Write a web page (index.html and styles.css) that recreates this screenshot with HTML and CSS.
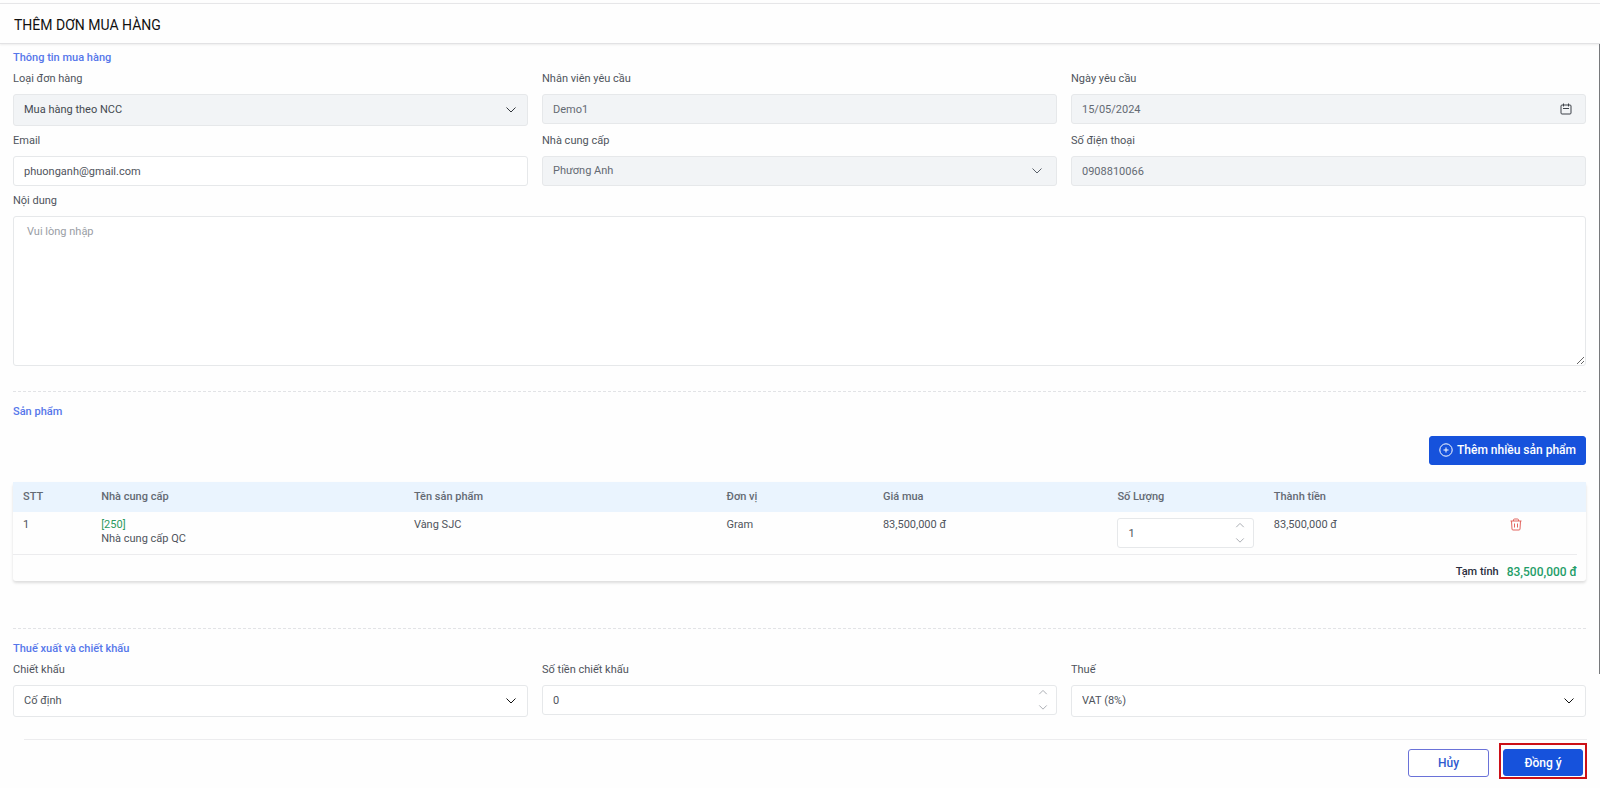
FILE: index.html
```html
<!DOCTYPE html>
<html lang="vi">
<head>
<meta charset="utf-8">
<meta name="viewport" content="width=device-width, initial-scale=1">
<title>Thêm đơn mua hàng</title>
<link rel="stylesheet" href="styles.css">
</head>
<body>
<svg class="sprite" aria-hidden="true">
  <symbol id="chev-down" viewBox="0 0 12 8"><path d="M1.5 1.5 6 6l4.500-4.500"/></symbol>
  <symbol id="chev-up" viewBox="0 0 12 8"><path d="M1.500 6 6 1.500 10.500 6"/></symbol>
</svg>
<header class="page-header"><h1 class="page-title">THÊM DƠN MUA HÀNG</h1></header>
<main class="page-body">
  <section class="section">
    <h2 class="section-title">Thông tin mua hàng</h2>
    <div class="form-grid">
      <div class="field">
        <label class="label" for="type">Loại đơn hàng</label>
        <div class="control">
          <select class="input input-tall input-muted input-dark" id="type"><option>Mua hàng theo NCC</option></select>
          <svg class="chevron"><use href="#chev-down"/></svg>
        </div>
      </div>
      <div class="field">
        <label class="label" for="staff">Nhân viên yêu cầu</label>
        <input class="input input-muted" id="staff" type="text" value="Demo1" readonly>
      </div>
      <div class="field">
        <label class="label" for="date">Ngày yêu cầu</label>
        <div class="control">
          <input class="input input-muted" id="date" type="text" value="15/05/2024" readonly>
          <svg class="calendar" viewBox="0 0 12 12"><rect x="1" y="2" width="10" height="9" rx="1"/><path d="M3.500 0.500v3M8.500 0.500v3M3 5.500h6"/></svg>
        </div>
      </div>
      <div class="field">
        <label class="label" for="email">Email</label>
        <input class="input" id="email" type="email" value="phuonganh@gmail.com">
      </div>
      <div class="field">
        <label class="label" for="supplier">Nhà cung cấp</label>
        <div class="control">
          <select class="input input-muted" id="supplier"><option>Phương Anh</option></select>
          <svg class="chevron chevron-inset"><use href="#chev-down"/></svg>
        </div>
      </div>
      <div class="field">
        <label class="label" for="phone">Số điện thoại</label>
        <input class="input input-muted" id="phone" type="tel" value="0908810066" readonly>
      </div>
      <div class="field field-wide">
        <label class="label" for="content">Nội dung</label>
        <textarea class="input textarea" id="content" placeholder="Vui lòng nhập"></textarea>
      </div>
    </div>
  </section>

  <section class="section section-ruled">
    <h2 class="section-title">Sản phẩm</h2>
    <div class="toolbar">
      <button class="btn btn-add" type="button">
        <svg class="plus" viewBox="0 0 14 14"><circle cx="7" cy="7" r="6.200"/><path d="M7 4.500v5M4.500 7h5"/></svg>
        <span>Thêm nhiều sản phẩm</span>
      </button>
    </div>
    <div class="card">
      <table class="products">
        <colgroup><col class="w1"><col class="w4"><col class="w4"><col class="w2"><col class="w3"><col class="w2"><col class="w2"><col></colgroup>
        <thead>
          <tr><th>STT</th><th>Nhà cung cấp</th><th>Tên sản phẩm</th><th>Đơn vị</th><th>Giá mua</th><th>Số Lượng</th><th>Thành tiền</th><td></td></tr>
        </thead>
        <tbody>
          <tr>
            <td>1</td>
            <td><span class="code">[250]</span><br>Nhà cung cấp QC</td>
            <td>Vàng SJC</td>
            <td>Gram</td>
            <td>83,500,000 đ</td>
            <td>
              <div class="control">
                <input class="input" type="text" inputmode="numeric" value="1" aria-label="Số Lượng">
                <span class="spinner"><svg><use href="#chev-up"/></svg><svg><use href="#chev-down"/></svg></span>
              </div>
            </td>
            <td>83,500,000 đ</td>
            <td class="action-cell">
              <button class="trash" type="button" aria-label="Xóa"><svg viewBox="0 0 12 12"><path d="M0.500 2.500h11M3.500 2.500v-1q0-1 1-1h3q1 0 1 1v1M1.500 2.500l.5 8q0 1 1 1h6q1 0 1-1l.5-8M4.500 5v4M7.500 5v4"/></svg></button>
            </td>
          </tr>
        </tbody>
      </table>
      <div class="subtotal"><span>Tạm tính</span><strong class="subtotal-value">83,500,000 đ</strong></div>
    </div>
  </section>

  <section class="section section-ruled section-tax">
    <h2 class="section-title">Thuế xuất và chiết khấu</h2>
    <div class="form-grid">
      <div class="field">
        <label class="label" for="discount">Chiết khấu</label>
        <div class="control">
          <select class="input input-tall" id="discount"><option>Cố định</option></select>
          <svg class="chevron chevron-dark"><use href="#chev-down"/></svg>
        </div>
      </div>
      <div class="field">
        <label class="label" for="amount">Số tiền chiết khấu</label>
        <div class="control">
          <input class="input" id="amount" type="text" inputmode="numeric" value="0">
          <span class="spinner"><svg><use href="#chev-up"/></svg><svg><use href="#chev-down"/></svg></span>
        </div>
      </div>
      <div class="field">
        <label class="label" for="tax">Thuế</label>
        <div class="control">
          <select class="input input-tall" id="tax"><option>VAT (8%)</option></select>
          <svg class="chevron chevron-dark"><use href="#chev-down"/></svg>
        </div>
      </div>
    </div>
  </section>
</main>
<footer class="page-footer">
  <button class="btn btn-outline" type="button">Hủy</button>
  <div class="highlight"><button class="btn btn-confirm" type="button">Đồng ý</button></div>
</footer>
<div class="scroll-thumb"></div>
</body>
</html>
```

FILE: styles.css
```css
* { box-sizing: border-box; }

body {
  margin: 0;
  background: #fefefe;
  color: #4f545c;
  font: 11px/14px Roboto, "Noto Sans", sans-serif;
}

.sprite { display: none; }
svg { fill: none; stroke: currentColor; }
button, input, select, textarea { font: inherit; color: inherit; }

.page-header {
  margin-top: 3px;
  padding: 12px 14px 8px;
  border-top: 1px solid #e6e6e8;
  border-bottom: 1px solid #e2e2e4;
  box-shadow: 0 1px 2px #00000012;
}

.page-title {
  margin: 0;
  color: #111;
  font-size: 14px;
  font-weight: 400;
  line-height: 19px;
}

.page-body { padding: 6px 14px 0 13px; }

.section-title {
  margin: 0 0 5px;
  color: #5677ea;
  font-size: 11px;
  font-weight: 500;
  line-height: 16px;
}

.section-ruled {
  margin-top: 25px;
  padding-top: 12px;
  border-top: 1px dashed #e2e3e6;
}

.section-tax { margin-top: 47px; }

.form-grid {
  display: grid;
  grid-template-columns: repeat(3, 1fr);
  gap: 7px 14px;
  align-items: start;
}

.field-wide { grid-column: 1 / -1; }

.label {
  display: block;
  margin-bottom: 7px;
  line-height: 16px;
}

.control { position: relative; }

.input {
  display: block;
  width: 100%;
  height: 30px;
  padding: 0 10px;
  border: 1px solid #e6e8ea;
  border-radius: 3px;
  outline: 0;
  background: #fff;
  appearance: none;
}

.input-tall { height: 32px; }
.input-muted { background: #f2f4f6; color: #646a73; }
.input-dark { color: #444950; }

.textarea {
  height: 150px;
  padding: 8px 13px;
  resize: vertical;
}

.textarea::placeholder { color: #9a9ea5; }

.chevron {
  position: absolute;
  top: 50%;
  right: 11px;
  width: 12px;
  height: 8px;
  margin-top: -4px;
  color: #33373d;
  pointer-events: none;
}

.chevron-inset { right: 14px; color: #5a6069; }
.chevron-dark { color: #111; }

.calendar {
  position: absolute;
  top: 50%;
  right: 14px;
  width: 12px;
  height: 12px;
  margin-top: -6px;
  color: #3c4148;
}

.spinner {
  position: absolute;
  top: 4px;
  right: 9px;
  bottom: 4px;
  display: flex;
  flex-direction: column;
  justify-content: space-between;
  color: #9a9ea5;
}

.spinner svg { width: 10px; height: 7px; }

.toolbar {
  display: flex;
  justify-content: flex-end;
  margin: 16px 0 17px;
}

.btn {
  display: flex;
  align-items: center;
  justify-content: center;
  border: 1px solid #1652dc;
  border-radius: 3px;
  background: #1652dc;
  color: #fff;
  font-size: 12px;
  font-weight: 500;
}

.btn-add {
  gap: 4px;
  height: 29px;
  padding: 0 9px 2px;
}

.plus { width: 14px; height: 14px; }

.card {
  border-radius: 3px;
  box-shadow: 0 2px 3px #00000022;
}

.products {
  width: 100%;
  border-collapse: collapse;
  table-layout: fixed;
}

/* Column units leave the card's right inset to the action column. */
.w1 { width: 4.97%; }
.w2 { width: 9.94%; }
.w3 { width: 14.91%; }
.w4 { width: 19.88%; }

.products thead { background: #eaf4fe; }
.products th, .products td {
  padding: 6px 10px;
  text-align: left;
  vertical-align: top;
}

.products th {
  height: 30px;
  padding: 0 10px;
  color: #646a73;
  font-weight: 500;
  vertical-align: middle;
}

.products thead td { padding: 0; }
.products .action-cell { padding-left: 36px; text-align: center; }
.code { color: #2c9a5f; }

.trash {
  padding: 0;
  border: 0;
  background: none;
  color: #e2655f;
}

.trash svg { display: block; width: 12px; height: 13px; }

.subtotal {
  display: flex;
  align-items: center;
  justify-content: flex-end;
  gap: 8px;
  height: 27px;
  margin-right: 9px;
  padding-top: 8px;
  border-top: 1px solid #ececee;
  color: #2a2d3c;
  font-weight: 500;
}

.subtotal-value {
  color: #1f9d68;
  font-size: 12px;
  font-weight: 500;
}

.page-footer {
  display: flex;
  align-items: flex-start;
  justify-content: flex-end;
  gap: 10px;
  margin: 22px 13px 0 24px;
  padding-top: 3px;
  border-top: 1px solid #ececee;
}

.btn-outline {
  width: 81px;
  height: 28px;
  margin-top: 6px;
  border-color: #6a72d8;
  background: #fff;
  color: #2f5bd0;
}

.btn-confirm { width: 80px; height: 27px; }

.highlight {
  padding: 4px 2px 1px;
  border: 2px solid #cc1017;
}

.scroll-thumb {
  position: fixed;
  top: 44px;
  right: 0;
  width: 1px;
  height: 80%;
  background: #77797c;
}
```
